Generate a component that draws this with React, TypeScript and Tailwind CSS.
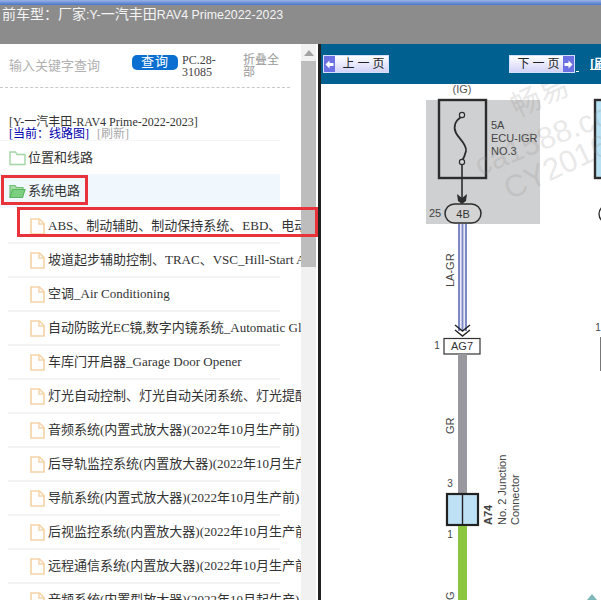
const rows = [
  "ABS、制动辅助、制动保持系统、EBD、电动驻车制动系统",
  "坡道起步辅助控制、TRAC、VSC_Hill-Start Assist Control",
  "空调_Air Conditioning",
  "自动防眩光EC镜,数字内镜系统_Automatic Glare-Resistant",
  "车库门开启器_Garage Door Opener",
  "灯光自动控制、灯光自动关闭系统、灯光提醒系统",
  "音频系统(内置式放大器)(2022年10月生产前)",
  "后导轨监控系统(内置放大器)(2022年10月生产前)",
  "导航系统(内置式放大器)(2022年10月生产前)",
  "后视监控系统(内置放大器)(2022年10月生产前)",
  "远程通信系统(内置放大器)(2022年10月生产前)",
  "音频系统(内置型放大器)(2022年10月起生产)",
];

function FolderIcon({ open }: { open?: boolean }) {
  return (
    <svg width="17" height="16" viewBox="0 0 17 16" className="shrink-0">
      {open ? (
        <>
          <path d="M1 14V2.5h5l1.5 2H14V7" fill="#a5dca5" stroke="#6fbf73" strokeWidth="1.2" />
          <path d="M1 14.5 3.5 6.5H16l-2.5 8z" fill="#7ccf80" stroke="#5cb563" strokeWidth="1.2" />
        </>
      ) : (
        <path d="M1 14.5V2h5.5l1.5 2.5h8v10z" fill="#fff" stroke="#a3d4a3" strokeWidth="1.4" />
      )}
    </svg>
  );
}

function FileIcon() {
  return (
    <svg width="15" height="17" viewBox="0 0 15 17" className="shrink-0">
      <path d="M1 1h8.5L14 5.5V16H1z" fill="#fff" stroke="#f6d3a6" strokeWidth="1.6" />
      <path d="M9 1v5h5" fill="none" stroke="#f6d3a6" strokeWidth="1.4" />
    </svg>
  );
}

function PageButton({ label, next }: { label: string; next?: boolean }) {
  const arrow = (
    <span className="flex h-full w-[11px] shrink-0 items-center justify-center bg-[#6b70e2]">
      <svg width="9" height="9" viewBox="0 0 9 9">
        <path d={next ? "M0.5 3h4V0.5L8.5 4.5l-4 4V6h-4z" : "M8.5 3h-4V0.5L0.5 4.5l4 4V6h4z"} fill="#fff" />
      </svg>
    </span>
  );
  return (
    <div className="flex h-[18px] w-[66px] shrink-0 items-center border border-[#d5defa] bg-gradient-to-b from-[#ffffff] to-[#d3d3f8]">
      {!next && arrow}
      <span className="flex-1 pl-[7px] text-center text-[12px] tracking-[3px] text-[#222]">{label}</span>
      {next && arrow}
    </div>
  );
}

function Diagram() {
  return (
    <svg viewBox="321 84 280 516" width="280" height="516" className="block font-['Liberation_Sans','Noto_Sans_CJK_SC',sans-serif]">
      <rect x="426" y="100" width="114" height="124" fill="#cfd0d1" />
      <text x="462" y="93" fontSize="11" textAnchor="middle" fill="#555">(IG)</text>
      <rect x="439" y="100" width="47" height="78" fill="none" stroke="#2d2d2d" strokeWidth="2.4" />
      <path d="M461 117c-6 4-8 10-5 16 3 6 11 11 10 18-1 4-2 7-4 10" fill="none" stroke="#2d2d2d" strokeWidth="1.8" />
      <circle cx="462" cy="115" r="2.6" fill="#d8d8d8" stroke="#2d2d2d" strokeWidth="1.2" />
      <circle cx="462" cy="162" r="2.6" fill="#d8d8d8" stroke="#2d2d2d" strokeWidth="1.2" />
      <g fontSize="11" fill="#444">
        <text x="491" y="129">5A</text>
        <text x="491" y="142">ECU-IGR</text>
        <text x="491" y="155">NO.3</text>
        <text x="429" y="217">25</text>
      </g>
      <path d="M462 165v36" stroke="#2d2d2d" strokeWidth="1.6" />
      <path d="M457 194l5 4 5-4-1 7-4 3-4-3z" fill="#2d2d2d" />
      <rect x="445" y="204" width="36" height="19" rx="9.5" fill="#d4d4d4" stroke="#2d2d2d" strokeWidth="1.5" />
      <text x="463" y="218" fontSize="11" textAnchor="middle" fill="#333">4B</text>

      <rect x="458" y="224" width="9" height="107" fill="#7e88c6" />
      <rect x="460" y="224" width="1.6" height="107" fill="#e8eaf6" />
      <rect x="463.4" y="224" width="1.6" height="107" fill="#e8eaf6" />
      <path d="M455 325l7.5 6 7.5-6M455 330l7.5 6 7.5-6" fill="none" stroke="#222" strokeWidth="1.4" />
      <rect x="444" y="338.5" width="36" height="15.5" fill="#fff" stroke="#333" strokeWidth="1.2" />
      <text x="462" y="350" fontSize="11" textAnchor="middle" fill="#333">AG7</text>
      <text x="437" y="349" fontSize="10" textAnchor="middle" fill="#444">1</text>

      <rect x="458" y="354" width="9" height="140" fill="#98989e" />
      <rect x="447" y="494" width="31" height="31" fill="#bfe1f5" stroke="#222" strokeWidth="2.2" />
      <path d="M462.5 494v31" stroke="#222" strokeWidth="1.4" />
      <rect x="458" y="526" width="9" height="74" fill="#8cc63f" />
      <text x="450" y="487" fontSize="10" textAnchor="middle" fill="#444">3</text>
      <text x="450" y="538" fontSize="10" textAnchor="middle" fill="#444">1</text>

      <g fontSize="11" fill="#444">
        <text transform="translate(454 287) rotate(-90)">LA-GR</text>
        <text transform="translate(454 434) rotate(-90)">GR</text>
        <text transform="translate(454 600) rotate(-90)">G</text>
        <text transform="translate(492 525) rotate(-90)" fontWeight="700">A74</text>
        <text transform="translate(506 525) rotate(-90)">No. 2 Junction</text>
        <text transform="translate(519 525) rotate(-90)">Connector</text>
      </g>

      <rect x="595" y="100" width="10" height="78" fill="#b7e1f3" stroke="#2d2d2d" strokeWidth="2.4" />
      <rect x="599" y="205" width="20" height="18" rx="9" fill="#fff" stroke="#2d2d2d" strokeWidth="1.4" />
      <text x="598" y="331" fontSize="10" textAnchor="middle" fill="#444">1</text>
      <path d="M600.5 337v34" stroke="#777" strokeWidth="1" />
      <path d="M587 600l5-6 5 6z" fill="#7fb8b8" />

      <g fill="#8a8a8a" fillOpacity="0.2">
        <text transform="translate(517 118) rotate(-25)" fontSize="30">畅易</text>
        <text transform="translate(480 176) rotate(-22)" fontSize="31">ca1588.com</text>
        <text transform="translate(510 200) rotate(-25)" fontSize="31">CY2016</text>
      </g>
    </svg>
  );
}

export default function App() {
  return (
    <div className="flex h-[600px] w-[601px] flex-col overflow-hidden bg-white font-['Liberation_Serif','Noto_Sans_CJK_SC',serif]">
      <div className="h-[5px] shrink-0 bg-gradient-to-b from-[#9ab4e6] to-[#4a74c9]" />
      <div className="h-[39px] shrink-0 overflow-hidden bg-[#8c8c8c] pl-[2px] font-['Liberation_Sans','Noto_Sans_CJK_SC',sans-serif] text-[14px] leading-[18px] whitespace-pre text-[#f4f4f4]">
        前车型：厂家<span className="text-[12.4px]">:Y-</span>一汽丰田<span className="text-[12.4px]">RAV4 Prime2022-2023</span>
      </div>

      <div className="flex min-h-0 flex-1">
        <div className="relative flex w-[318px] shrink-0">
          <div className="w-[301px] shrink-0 overflow-hidden">
            <div className="flex h-[44px] w-[290px] items-center border-b border-dashed border-[#c8c8c8]">
              <div className="ml-[9px] w-[123px] text-[13px] text-[#b0b0b0]">输入关键字查询</div>
              <div className="mb-[7px] h-[15px] w-[46px] rounded-[5px] bg-[#0a6fd0] text-center text-[13px] leading-[14px] tracking-[1px] text-white">查询</div>
              <div className="ml-[4px] w-[61px] text-[12px] leading-[12px] text-[#444]">PC.28-<br />31085</div>
              <div className="w-[37px] text-[12px] leading-[12px] text-[#999]">折叠全部</div>
            </div>

            <div className="mt-[28px] pl-[9px] text-[12px] leading-[12px] whitespace-nowrap">
              <div className="text-[#333]">[Y-一汽丰田-RAV4 Prime-2022-2023]</div>
              <div className="text-[#0000b0]">
                [当前：线路图]<span className="ml-[8px] text-[#aaa]">[刷新]</span>
              </div>
            </div>

            <div className="w-[280px] text-[13px] text-[#333]">
              <div className="flex h-[34px] items-center gap-[2px] border-t border-[#f5f5f5] pl-[9px]">
                <FolderIcon />
                位置和线路
              </div>
              <div className="flex h-[34px] items-center gap-[2px] bg-[#f0f8fe] pl-[9px]">
                <FolderIcon open />
                系统电路
              </div>
              <div className="pt-[2px]">
                {rows.map((row) => (
                  <div key={row} className="ml-[8px] flex h-[34px] items-center gap-[3px] border-b-2 border-[#f3f3f3] pl-[22px] whitespace-nowrap">
                    <FileIcon />
                    <span>{row}</span>
                  </div>
                ))}
              </div>
            </div>
          </div>

          <div className="flex h-full w-[15px] shrink-0 flex-col bg-[#f1f1f1]">
            <div className="flex h-[17px] items-center justify-center">
              <div className="h-0 w-0 border-x-[5px] border-b-[6px] border-x-transparent border-b-[#a3a3a3]" />
            </div>
            <div className="h-[206px] bg-[#bdbdbd]" />
          </div>

          <div className="absolute top-[131px] left-[1px] h-[30px] w-[87px] border-[3px] border-[#e8333a]" />
          <div className="absolute top-[163px] left-[17px] h-[30px] w-[301px] border-[3px] border-[#e8333a]" />
        </div>

        <div className="w-[3px] shrink-0 bg-[#222]" />

        <div className="flex min-w-0 flex-1 flex-col">
          <div className="flex h-[40px] shrink-0 items-center overflow-hidden bg-[#00608f] pl-[2px]">
            <PageButton label="上一页" />
            <div className="ml-[120px] shrink-0">
              <PageButton label="下一页" next />
            </div>
            <span className="mt-[14px] ml-[1px] h-[1px] w-[3px] shrink-0 bg-white" />
            <span className="ml-[11px] shrink-0 text-[13px] font-bold whitespace-nowrap text-white underline">[刷新]</span>
          </div>
          <Diagram />
        </div>
      </div>
    </div>
  );
}
